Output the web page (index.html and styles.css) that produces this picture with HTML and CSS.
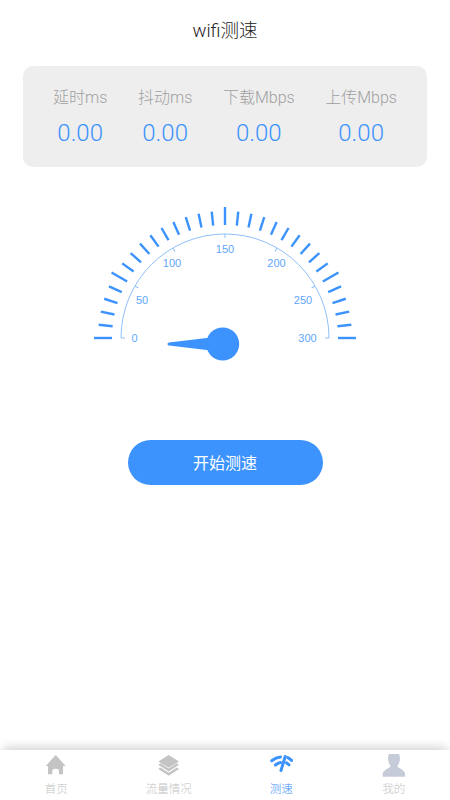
FILE: index.html
```html
<!DOCTYPE html>
<html lang="zh-CN">
<head>
    <meta charset="UTF-8">
    <meta name="viewport" content="width=device-width, initial-scale=1.0">
    <title>wifi测速</title>
    <link rel="stylesheet" href="styles.css">
</head>
<body>
    <div class="page">
        <header class="title">wifi测速</header>

        <section class="stats">
            <div class="stat"><span class="stat-label">延时ms</span><span class="stat-value">0.00</span></div>
            <div class="stat"><span class="stat-label">抖动ms</span><span class="stat-value">0.00</span></div>
            <div class="stat"><span class="stat-label">下载Mbps</span><span class="stat-value">0.00</span></div>
            <div class="stat"><span class="stat-label">上传Mbps</span><span class="stat-value">0.00</span></div>
        </section>

        <!-- gauge: origin is the centre of the dial -->
        <svg class="gauge" width="280" height="180" viewBox="-140 -140 280 180">
            <g class="ticks">
                <line class="major" x1="-131" x2="-113" transform="rotate(0)"/>
                <line x1="-127" x2="-113" transform="rotate(6)"/>
                <line x1="-127" x2="-113" transform="rotate(12)"/>
                <line x1="-127" x2="-113" transform="rotate(18)"/>
                <line x1="-127" x2="-113" transform="rotate(24)"/>
                <line class="major" x1="-131" x2="-113" transform="rotate(30)"/>
                <line x1="-127" x2="-113" transform="rotate(36)"/>
                <line x1="-127" x2="-113" transform="rotate(42)"/>
                <line x1="-127" x2="-113" transform="rotate(48)"/>
                <line x1="-127" x2="-113" transform="rotate(54)"/>
                <line x1="-127" x2="-113" transform="rotate(60)"/>
                <line x1="-127" x2="-113" transform="rotate(66)"/>
                <line x1="-127" x2="-113" transform="rotate(72)"/>
                <line x1="-127" x2="-113" transform="rotate(78)"/>
                <line x1="-127" x2="-113" transform="rotate(84)"/>
                <line class="major" x1="-131" x2="-113" transform="rotate(90)"/>
                <line x1="-127" x2="-113" transform="rotate(96)"/>
                <line x1="-127" x2="-113" transform="rotate(102)"/>
                <line x1="-127" x2="-113" transform="rotate(108)"/>
                <line x1="-127" x2="-113" transform="rotate(114)"/>
                <line x1="-127" x2="-113" transform="rotate(120)"/>
                <line x1="-127" x2="-113" transform="rotate(126)"/>
                <line x1="-127" x2="-113" transform="rotate(132)"/>
                <line x1="-127" x2="-113" transform="rotate(138)"/>
                <line x1="-127" x2="-113" transform="rotate(144)"/>
                <line class="major" x1="-131" x2="-113" transform="rotate(150)"/>
                <line x1="-127" x2="-113" transform="rotate(156)"/>
                <line x1="-127" x2="-113" transform="rotate(162)"/>
                <line x1="-127" x2="-113" transform="rotate(168)"/>
                <line x1="-127" x2="-113" transform="rotate(174)"/>
                <line class="major" x1="-131" x2="-113" transform="rotate(180)"/>
            </g>
            <g class="scale">
                <path d="M-104 0A104 104 0 0 1 104 0"/>
                <line x1="-104" x2="-100" transform="rotate(0)"/>
                <line x1="-104" x2="-100" transform="rotate(30)"/>
                <line x1="-104" x2="-100" transform="rotate(60)"/>
                <line x1="-104" x2="-100" transform="rotate(90)"/>
                <line x1="-104" x2="-100" transform="rotate(120)"/>
                <line x1="-104" x2="-100" transform="rotate(150)"/>
                <line x1="-104" x2="-100" transform="rotate(180)"/>
            </g>
            <g class="scale-labels">
                <text x="-90.500" y="4">0</text>
                <text x="-83" y="-34.500">50</text>
                <text x="-53" y="-71">100</text>
                <text x="0" y="-85">150</text>
                <text x="51.500" y="-71">200</text>
                <text x="78" y="-34.500">250</text>
                <text x="82.500" y="4">300</text>
            </g>
            <g class="needle">
                <circle cx="-2.300" cy="6" r="16.500"/>
                <path d="M-12 -0.800L-56 4.500A1.500 1.500 0 0 0 -56 7.500L-12 12.800Z"/>
            </g>
        </svg>

        <button class="start-btn">开始测速</button>
    </div>

    <nav class="tabbar">
        <a class="tab">
            <svg class="tab-icon" viewBox="0 0 24 24"><path fill="#c4c4c4" d="M11.700 1L1.700 12H4v8.300h4.300V17c0-1.500 1.200-2.200 3.400-2.200s3.300.7 3.300 2.200v3.300h4V12h2.700z"/></svg>
            <span>首页</span>
        </a>
        <a class="tab">
            <svg class="tab-icon" viewBox="0 0 24 24" fill="#c4c4c4"><path d="M11.700 1L22 7.500 11.700 13.800 1.300 7.500z"/><path d="M3.500 9.300l8.200 5.200 8.200-5.200 2.100 1.400-10.300 6.700-10.400-6.700z"/><path d="M3.500 13.600l8.200 5.200 8.200-5.200 2.100 1.400-10.300 6.700L1.300 15z"/></svg>
            <span>流量情况</span>
        </a>
        <a class="tab active">
            <svg class="tab-icon" viewBox="0 0 24 24" fill="none" stroke="#3c93fd" stroke-width="3" stroke-linecap="round"><path d="M2.700 6.700C5.500 4.500 8.500 3.200 11.500 2.900"/><path d="M18.800 3.600C20 4.200 21.500 5.200 22.700 6.500"/><path d="M6.500 11C8 9.700 9.800 8.900 11.500 8.600"/><path d="M17.500 8.800C18.500 9.300 19.200 10 20 10.800"/><path d="M16.200 2.500L12 16.500"/></svg>
            <span>测速</span>
        </a>
        <a class="tab">
            <svg class="tab-icon" viewBox="0 0 24 24"><path fill="#c5cbd9" d="M7 0H17C18.500 3 18.500 8 15.500 12C15.500 14 20 14 23 19V22.700H.7V19C4 14 8.500 14 8.500 12C5.500 8 5.500 3 7 0Z"/></svg>
            <span>我的</span>
        </a>
    </nav>
</body>
</html>
```

FILE: styles.css
```css
* {
    margin: 0;
    padding: 0;
    box-sizing: border-box;
}
html, body {
    height: 100%;
}
body {
    display: flex;
    flex-direction: column;
    font-family: Roboto, "Noto Sans CJK SC", sans-serif;
    background-color: #ffffff;
    overflow: hidden;
}
.page {
    flex: 1;
    display: flex;
    flex-direction: column;
    align-items: center;
}

.title {
    height: 66px;
    padding-top: 18px;
    font-size: 18.500px;
    line-height: 26px;
    font-weight: 300;
    color: #222222;
}

/* Stats card */
.stats {
    width: 404px;
    height: 101px;
    display: flex;
    justify-content: space-between;
    padding: 20px 30px 0 30px;
    background-color: #eeeeee;
    border-radius: 10px;
}
.stat {
    display: flex;
    flex-direction: column;
    align-items: center;
    gap: 7px;
}
.stat-label {
    font-size: 16px;
    line-height: 24px;
    font-weight: 300;
    color: #a0a0a0;
}
.stat-value {
    font-size: 24px;
    line-height: 32px;
    font-weight: 300;
    color: #3c93fd;
}

/* Gauge */
.gauge {
    display: block;
    margin-top: 30.500px;
}
.ticks line {
    stroke: #3c93fd;
    stroke-width: 2.400;
}
.scale path,
.scale line {
    fill: none;
    stroke: #8fc0fb;
    stroke-width: 1;
}
.scale-labels text {
    font-family: "Liberation Sans", sans-serif;
    font-size: 11px;
    text-anchor: middle;
    fill: #5fa6fc;
}
.needle {
    fill: #3c93fd;
}

.start-btn {
    width: 195px;
    height: 45px;
    margin-top: 62.500px;
    padding-bottom: 2px;
    border: none;
    border-radius: 23px;
    background-color: #3c93fd;
    color: #ffffff;
    font-family: inherit;
    font-size: 16px;
    font-weight: 400;
}

/* Bottom tab bar */
.tabbar {
    height: 50px;
    display: flex;
    background-color: #ffffff;
    box-shadow: 0 -5px 10px -3px rgba(0, 0, 0, 0.2);
}
.tab {
    flex: 1;
    display: flex;
    flex-direction: column;
    align-items: center;
    padding-top: 4px;
    font-size: 11.500px;
    line-height: 16px;
    font-weight: 300;
    color: #c4c4c4;
}
.tab-icon {
    display: block;
    width: 24px;
    height: 24px;
    margin-bottom: 3px;
}
.tab.active {
    color: #3c93fd;
}
```
